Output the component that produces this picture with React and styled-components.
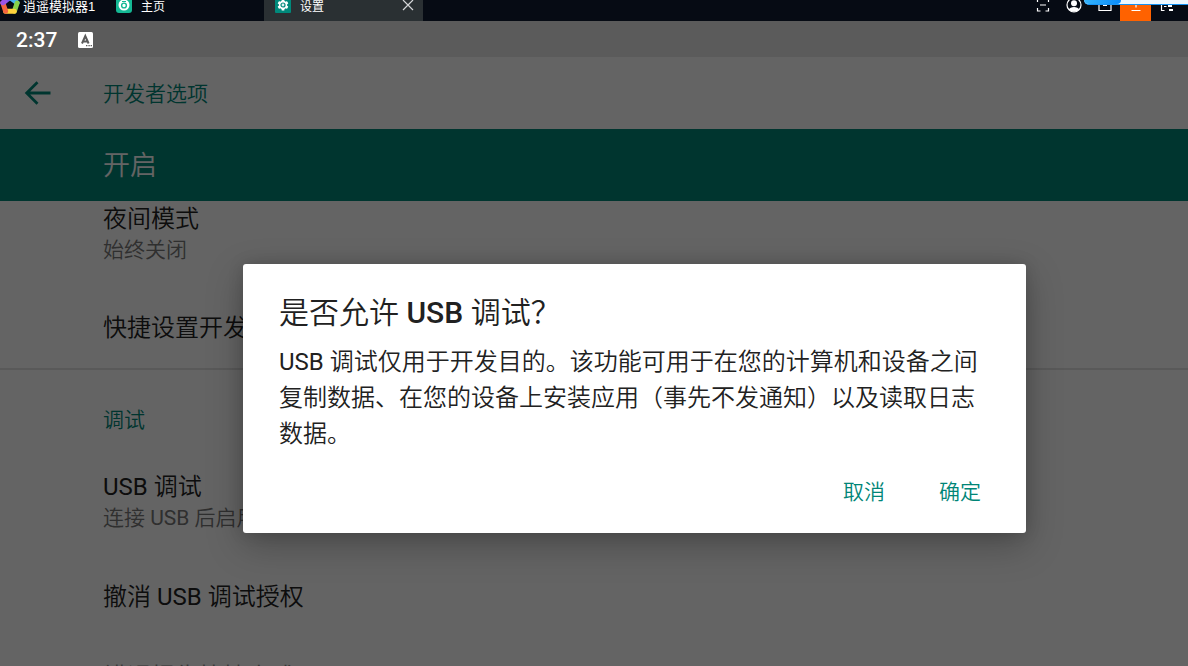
import React from "react";
import styled, { createGlobalStyle } from "styled-components";

const GlobalStyle = createGlobalStyle`
  * { box-sizing: border-box; }
  body { margin: 0; background: #646464; font-family: Roboto, "Noto Sans CJK SC DemiLight", "Noto Sans CJK SC", sans-serif; }
  button { border: 0; padding: 0; margin: 0; background: none; font: inherit; color: inherit; cursor: pointer; }
  h1, h2, p { margin: 0; font-weight: 400; }
`;

const Page = styled.div`
  display: flex;
  flex-direction: column;
  height: 100vh;
  overflow: hidden;
`;

const EmulatorBar = styled.header`
  position: relative;
  display: flex;
  align-items: flex-end;
  flex: none;
  height: 21px;
  overflow: hidden;
  background: #060b14;
  color: #fff;
  font-family: "Liberation Sans", "Noto Sans CJK SC", sans-serif;
  font-size: 12px;
`;

const Brand = styled.div`
  display: flex;
  align-items: center;
  gap: 3px;
  width: 105px;
  height: 32px;
  font-size: 13px;
  white-space: nowrap;
`;

const Tab = styled.button`
  display: flex;
  align-items: center;
  gap: 9px;
  width: 159px;
  height: 32px;
  padding: 0 9px 0 11px;
  background: ${(p) => (p.$active ? "#2a3033" : "transparent")};
`;

const TabLabel = styled.span`
  flex: 1;
  text-align: left;
`;

const Tools = styled.div`
  display: flex;
  margin-left: auto;
  padding-right: 6px;
`;

const Tool = styled.button`
  display: flex;
  align-items: center;
  justify-content: center;
  width: 31px;
  height: 32px;
  background: ${(p) => (p.$accent ? "#ff6200" : "transparent")};
`;

const FloatingWidget = styled.div`
  position: absolute;
  top: 0;
  right: 0;
  display: flex;
  width: 104px;
  height: 5px;
  overflow: hidden;
  border-bottom: 1px solid #1593f5;
  border-bottom-left-radius: 6px;
  background: #eef8ff;
`;

const WidgetBadge = styled.div`
  width: 37px;
  border-radius: 0 0 6px 6px;
  background: linear-gradient(90deg, #35b4fb, #0a8bf8);
`;

const StatusBar = styled.div`
  display: flex;
  align-items: center;
  gap: 21px;
  flex: none;
  height: 36px;
  padding: 2px 16px 0;
  background: #5b5b5b;
  color: #fff;
  font-size: 21px;
  font-weight: 500;
`;

const Screen = styled.main`
  position: relative;
  flex: 1;
  min-height: 0;
  overflow: hidden;
  background: #fafafa;
`;

const AppBar = styled.div`
  display: flex;
  align-items: center;
  height: 72px;
  padding-left: 20px;
  color: #008577;
`;

const BackButton = styled.button`
  display: flex;
  width: 83px;
`;

const AppTitle = styled.h1`
  padding-top: 2px;
  font-size: 21px;
  line-height: 32px;
`;

const SwitchBar = styled.div`
  display: flex;
  align-items: center;
  height: 72px;
  padding: 0 24px 4px 103px;
  background: #008577;
  color: #fafafa;
  font-size: 27px;
`;

const ListViewport = styled.div`
  overflow: hidden;
`;

const List = styled.div`
  margin-top: -19px;
`;

const Row = styled.div`
  display: flex;
  flex-direction: column;
  justify-content: center;
  min-height: 84px;
  padding: ${(p) => (p.$disabled ? 24 : 22)}px 24px 20px 103px;
  border-bottom: ${(p) => (p.$last ? "2px solid #dedede" : "0")};
  opacity: ${(p) => (p.$disabled ? 0.5 : 1)};
`;

const RowTitle = styled.div`
  color: #212121;
  font-size: 24px;
  line-height: 30px;
`;

const RowSummary = styled.div`
  color: #757575;
  font-size: 21px;
  line-height: 32px;
`;

const Category = styled.h2`
  padding: 34px 24px 14px 103px;
  color: #008577;
  font-size: 21px;
  line-height: 32px;
`;

const Scrim = styled.div`
  position: absolute;
  inset: 0;
  display: flex;
  align-items: flex-start;
  padding: 207px 162px 0 243px;
  background: rgba(0, 0, 0, 0.6);
`;

const Dialog = styled.section`
  flex: 1;
  padding: 31px 18px 16px 36px;
  border-radius: 3px;
  background: #fff;
  box-shadow: 0 12px 36px rgba(0, 0, 0, 0.26), 0 0 16px rgba(0, 0, 0, 0.14);
  color: #212121;
`;

const DialogTitle = styled.h2`
  font-size: 30px;
  line-height: 36px;
  & > span { font-weight: 500; }
`;

const DialogText = styled.p`
  padding: 13px 18px 11px 0;
  font-size: 24px;
  line-height: 36px;
`;

const Actions = styled.div`
  display: flex;
  justify-content: flex-end;
`;

const Action = styled.button`
  height: 54px;
  padding: 0 27px;
  color: #008577;
  font-size: 21px;
`;

const LogoIcon = () => (
  <svg width="20" height="20" viewBox="0 0 20 20" fill="none" strokeWidth="5" strokeLinecap="round" aria-hidden="true">
    <path d="M2.900 7.700L10 2.500" stroke="#7a55f2" />
    <path d="M10 2.500L17.100 7.700" stroke="#45b2f0" />
    <path d="M17.100 8L14.400 16.100" stroke="#86d24a" />
    <path d="M14.200 16.300H5.600" stroke="#ffd23c" />
    <path d="M5.600 16.100L2.900 8" stroke="#f4653f" />
    <path d="M2.900 7.700L5 6.200" stroke="#9a55e8" />
  </svg>
);

const HomeIcon = () => (
  <svg width="16" height="16" viewBox="0 0 16 16" aria-hidden="true">
    <rect width="16" height="16" rx="3" fill="#14b894" />
    <circle cx="8" cy="8" r="5.5" fill="#fff" />
    <circle cx="8" cy="8.5" r="2.4" fill="none" stroke="#14b894" strokeWidth="1.4" />
    <path d="M6 4.500h4" stroke="#14b894" />
  </svg>
);

const GearIcon = () => (
  <svg width="16" height="16" viewBox="0 0 16 16" aria-hidden="true">
    <rect width="16" height="16" rx="1" fill="#00897b" />
    <g fill="#fff">
      <circle cx="8" cy="8" r="4.2" />
      {[0, 60, 120].map((a) => (
        <rect key={a} x="6.6" y="2.6" width="2.8" height="10.8" rx="0.5" transform={`rotate(${a} 8 8)`} />
      ))}
    </g>
    <circle cx="8" cy="8" r="2" fill="#e0f2f1" stroke="#00897b" strokeWidth="1.2" />
  </svg>
);

const CloseIcon = () => (
  <svg width="12" height="12" viewBox="0 0 12 12" aria-hidden="true">
    <path d="M1 1l10 10M11 1L1 11" stroke="#d5d6d8" strokeWidth="1.2" />
  </svg>
);

const ToolIcon = ({ children }) => (
  <svg width="16" height="16" viewBox="0 0 16 16" fill="none" stroke="#fff" strokeWidth="1.2" aria-hidden="true">
    {children}
  </svg>
);

const KeyboardBadge = () => (
  <svg width="15" height="16" viewBox="0 0 15 16" aria-hidden="true">
    <rect width="15" height="16" rx="1.5" fill="#fff" />
    <path d="M4 11.500L7.300 4l3.300 7.500M5.200 9.400h4.200" fill="none" stroke="#5b5b5b" strokeWidth="2" />
    <path d="M8 13.600h1.400M10.400 13.600h1.400M12.600 13.600H14" stroke="#5b5b5b" strokeWidth="1.3" />
  </svg>
);

const BackArrow = () => (
  <svg width="36" height="36" viewBox="0 0 36 36" fill="none" stroke="currentColor" strokeWidth="2.8" aria-hidden="true">
    <path d="M30.5 18H7M17.5 7.2L6.7 18l10.8 10.8" />
  </svg>
);

export default function App() {
  return (
    <Page>
      <GlobalStyle />
      <EmulatorBar>
        <Brand>
          <LogoIcon />
          逍遥模拟器1
        </Brand>
        <Tab>
          <HomeIcon />
          <TabLabel>主页</TabLabel>
        </Tab>
        <Tab $active>
          <GearIcon />
          <TabLabel>设置</TabLabel>
          <CloseIcon />
        </Tab>
        <Tools>
          <Tool aria-label="缩放">
            <ToolIcon>
              <path d="M2.500 5V2h3M10.500 2h3v3M13.500 11v3h-3M5.500 14h-3v-3M5 8h6" />
            </ToolIcon>
          </Tool>
          <Tool aria-label="账号">
            <ToolIcon>
              <circle cx="8" cy="8" r="7" />
              <circle cx="8" cy="6.200" r="3" fill="#fff" stroke="none" />
              <path d="M2.800 12.500c1.200-3.400 9.200-3.400 10.400 0C11 15.500 5 15.500 2.800 12.500z" fill="#fff" stroke="none" />
            </ToolIcon>
          </Tool>
          <Tool aria-label="消息">
            <ToolIcon>
              <path d="M2 3v10.500h12V3M6 8.500h4" />
            </ToolIcon>
          </Tool>
          <Tool $accent aria-label="置顶">
            <ToolIcon>
              <path d="M8 3v7.500M3.500 13.500h9" />
            </ToolIcon>
          </Tool>
          <Tool aria-label="窗口">
            <ToolIcon>
              <path d="M5.500 13.500H2.500V5M5 9.500h2.500" />
              <path d="M9 9h4M10 13h4" strokeWidth="2" />
            </ToolIcon>
          </Tool>
        </Tools>
        <FloatingWidget>
          <WidgetBadge />
        </FloatingWidget>
      </EmulatorBar>

      <StatusBar>
        <span>2:37</span>
        <KeyboardBadge />
      </StatusBar>

      <Screen>
        <AppBar>
          <BackButton aria-label="返回">
            <BackArrow />
          </BackButton>
          <AppTitle>开发者选项</AppTitle>
        </AppBar>
        <SwitchBar>开启</SwitchBar>
        <ListViewport>
          <List>
            <Row>
              <RowTitle>夜间模式</RowTitle>
              <RowSummary>始终关闭</RowSummary>
            </Row>
            <Row $last>
              <RowTitle>快捷设置开发</RowTitle>
            </Row>
            <Category>调试</Category>
            <Row>
              <RowTitle>USB 调试</RowTitle>
              <RowSummary>连接 USB 后启用</RowSummary>
            </Row>
            <Row>
              <RowTitle>撤消 USB 调试授权</RowTitle>
            </Row>
            <Row $disabled>
              <RowTitle>错误报告快捷方式</RowTitle>
              <RowSummary>在电源菜单中显示用于提交错误报告的按钮</RowSummary>
            </Row>
          </List>
        </ListViewport>

        <Scrim>
          <Dialog role="dialog" aria-modal="true" aria-labelledby="usb-dialog-title">
            <DialogTitle id="usb-dialog-title">
              是否允许 <span>USB</span> 调试？
            </DialogTitle>
            <DialogText>
              USB 调试仅用于开发目的。该功能可用于在您的计算机和设备之间复制数据、在您的设备上安装应用（事先不发通知）以及读取日志数据。
            </DialogText>
            <Actions>
              <Action>取消</Action>
              <Action>确定</Action>
            </Actions>
          </Dialog>
        </Scrim>
      </Screen>
    </Page>
  );
}
